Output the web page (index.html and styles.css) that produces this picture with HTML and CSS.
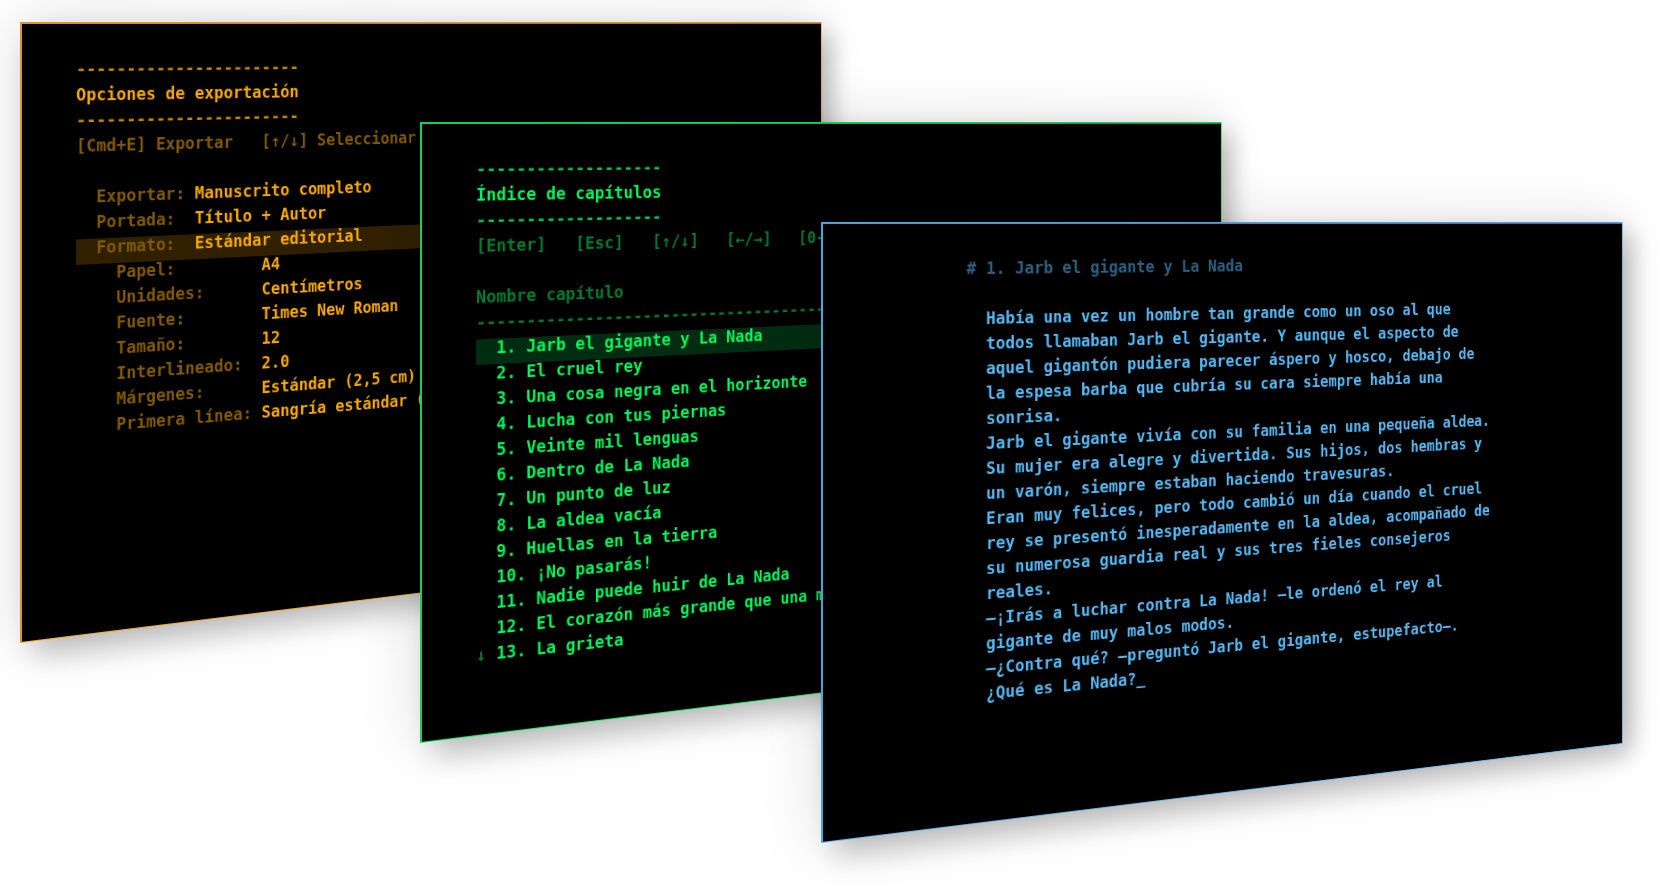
FILE: index.html
```html
<!DOCTYPE html>
<html lang="es">
<head>
    <meta charset="UTF-8">
    <meta name="viewport" content="width=device-width, initial-scale=1.0">
    <title>La Nada</title>
    <link rel="stylesheet" href="styles.css">
</head>
<body>
    <main class="desktop">
        <!-- Opciones de exportación -->
        <section class="window export">
            <div class="line rule">-----------------------</div>
            <h2 class="line">Opciones de exportación</h2>
            <div class="line rule">-----------------------</div>
            <div class="line dim">[Cmd+E] Exportar   [↑/↓] Seleccionar</div>
            <dl class="options">
                <div class="line option"><dt>Exportar:</dt><dd>Manuscrito completo</dd></div>
                <div class="line option"><dt>Portada:</dt><dd>Título + Autor</dd></div>
                <div class="line option selected"><dt>Formato:</dt><dd>Estándar editorial</dd></div>
                <div class="line option sub"><dt>Papel:</dt><dd>A4</dd></div>
                <div class="line option sub"><dt>Unidades:</dt><dd>Centímetros</dd></div>
                <div class="line option sub"><dt>Fuente:</dt><dd>Times New Roman</dd></div>
                <div class="line option sub"><dt>Tamaño:</dt><dd>12</dd></div>
                <div class="line option sub"><dt>Interlineado:</dt><dd>2.0</dd></div>
                <div class="line option sub"><dt>Márgenes:</dt><dd>Estándar (2,5 cm)</dd></div>
                <div class="line option sub"><dt>Primera línea:</dt><dd>Sangría estándar (</dd></div>
            </dl>
        </section>

        <!-- Índice -->
        <section class="window chapters">
            <div class="line rule">-------------------</div>
            <h2 class="line">Índice de capítulos</h2>
            <div class="line rule">-------------------</div>
            <div class="line dim">[Enter]   [Esc]   [↑/↓]   [←/→]   [0-</div>
            <div class="line dim heading">Nombre capítulo</div>
            <div class="line rule dim">-------------------------------------</div>
            <ul class="list">
                <li class="line selected">  1. Jarb el gigante y La Nada</li>
                <li class="line">  2. El cruel rey</li>
                <li class="line">  3. Una cosa negra en el horizonte</li>
                <li class="line">  4. Lucha con tus piernas</li>
                <li class="line">  5. Veinte mil lenguas</li>
                <li class="line">  6. Dentro de La Nada</li>
                <li class="line">  7. Un punto de luz</li>
                <li class="line">  8. La aldea vacía</li>
                <li class="line">  9. Huellas en la tierra</li>
                <li class="line">  10. ¡No pasarás!</li>
                <li class="line">  11. Nadie puede huir de La Nada</li>
                <li class="line">  12. El corazón más grande que una m</li>
                <li class="line"><span class="dim">↓</span> 13. La grieta</li>
            </ul>
        </section>

        <!-- Editor -->
        <article class="window editor">
            <h2 class="dim"># 1. Jarb el gigante y La Nada</h2>
            <div class="text">
                <p>Había una vez un hombre tan grande como un oso al que todos llamaban Jarb el gigante. Y aunque el aspecto de aquel gigantón pudiera parecer áspero y hosco, debajo de la espesa barba que cubría su cara siempre había una sonrisa.</p>
                <p>Jarb el gigante vivía con su familia en una pequeña aldea. Su mujer era alegre y divertida. Sus hijos, dos hembras y un varón, siempre estaban haciendo travesuras.</p>
                <p>Eran muy felices, pero todo cambió un día cuando el cruel rey se presentó inesperadamente en la aldea, acompañado de su numerosa guardia real y sus tres fieles consejeros reales.</p>
                <p>—¡Irás a luchar contra La Nada! —le ordenó el rey al gigante de muy malos modos.</p>
                <p>—¿Contra qué? —preguntó Jarb el gigante, estupefacto—. ¿Qué es La Nada?_</p>
            </div>
        </article>
    </main>
</body>
</html>
```

FILE: styles.css
```css
* { box-sizing: border-box; }
body { margin: 0; background: #fff; overflow: hidden; font-family: "DejaVu Sans Mono", monospace; font-size: 17px; font-weight: bold; }
h2, p, dl, dd, ul { margin: 0; padding: 0; }
h2 { font-size: 17px; font-weight: bold; }
.desktop { position: relative; min-height: 100vh; }

/* Ventanas en perspectiva: el lado derecho se aleja */
.window {
    position: absolute;
    width: 942px;
    height: 624px;
    padding: 37px 0 0 54px;
    color: var(--ink);
    background: #000;
    border: solid var(--edge);
    border-width: 2px 1px 1px 2px;
    border-bottom-color: var(--ink);
    box-shadow: 14px 14px 28px rgba(0, 0, 0, .22), 0 0 60px rgba(0, 0, 0, .14);
    transform-origin: 0 0;
    transform: matrix3d(1.0128, 0, 0, 0.000202, 0, 0.9952, 0, 0, 0, 0, 1, 0, 0, 0, 0, 1);
}
.export { left: 20px; top: 22px; --ink: #f8a900; --low: #835a00; --rule: #c88800; --bar: #302000; --edge: #d9962a; }
.chapters { left: 420px; top: 122px; --ink: #00f65c; --low: #007c30; --rule: #00c84a; --bar: #002d11; --edge: #18cf58; }
.editor { left: 821px; top: 222px; --ink: #57b8f3; --low: #2d6082; --edge: #50a2d6; }

.line { line-height: 18px; padding-bottom: 8px; white-space: pre; }
.rule { color: var(--rule); }
.dim { color: var(--low); }
.selected { background: var(--bar); }

.options { margin-top: 26px; }
.option { display: flex; padding-left: 2ch; }
.option dt { width: 10ch; color: var(--low); }
.sub { padding-left: 4ch; }
.sub dt { width: 15ch; }

.heading { margin-top: 26px; }
.list { list-style: none; }

.editor { padding: 33px 0 0 146px; line-height: 26px; }
.text { width: 62ch; padding: 26px 2ch 0; }
```
